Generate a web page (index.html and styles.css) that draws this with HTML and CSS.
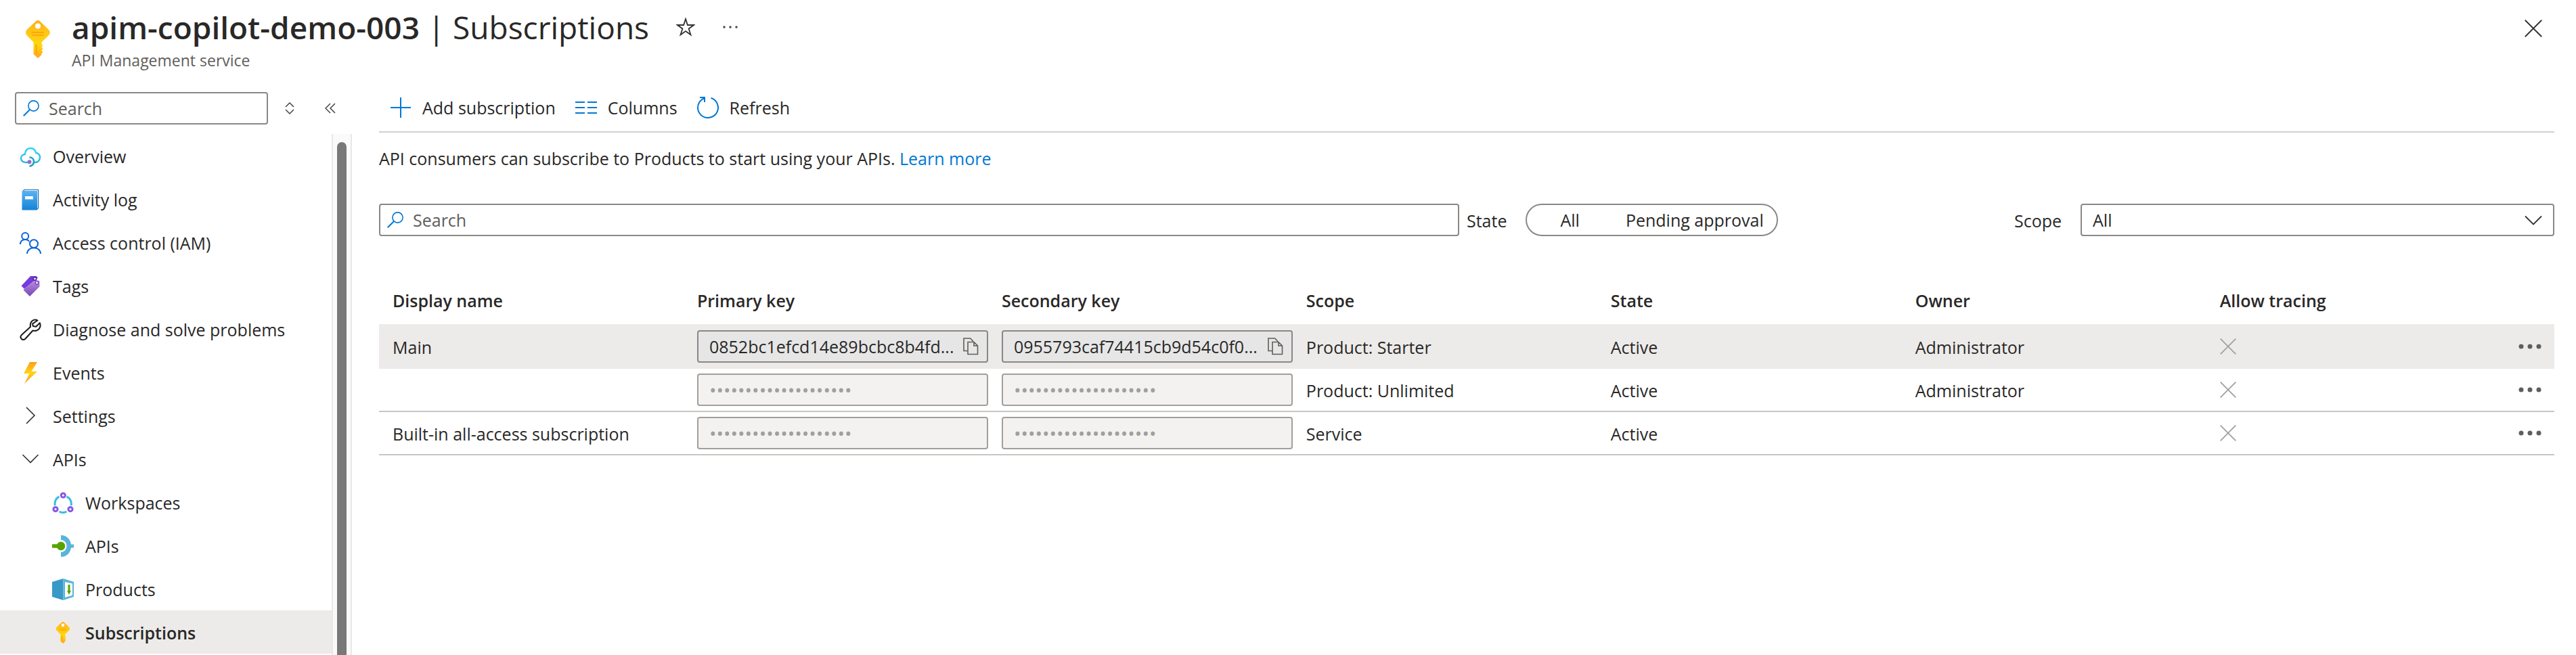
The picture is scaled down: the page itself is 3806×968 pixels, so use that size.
FILE: index.html
```html
<!DOCTYPE html>
<html lang="en">
<head>
<meta charset="utf-8">
<title>apim-copilot-demo-003 | Subscriptions</title>
<meta name="viewport" content="width=device-width, initial-scale=1">
<link rel="stylesheet" href="styles.css">
</head>
<body>
<svg class="defs" aria-hidden="true">
  <defs>
    <linearGradient id="gold" x1="0" y1="0" x2="0" y2="1">
      <stop offset="0" stop-color="#ffb01a"/><stop offset=".35" stop-color="#ffc814"/><stop offset=".65" stop-color="#ffd80f"/><stop offset="1" stop-color="#ffa51c"/>
    </linearGradient>
    <linearGradient id="cyan" x1="0" y1="0" x2="0" y2="1">
      <stop offset="0" stop-color="#32d4f5"/><stop offset="1" stop-color="#2bb8dc"/>
    </linearGradient>
    <linearGradient id="book" x1="0" y1="0" x2="0" y2="1">
      <stop offset="0" stop-color="#5ab2f2"/><stop offset="1" stop-color="#1383d8"/>
    </linearGradient>
    <linearGradient id="tag" x1="0" y1="0" x2="0" y2="1">
      <stop offset="0" stop-color="#c08ee6"/><stop offset="1" stop-color="#7348b0"/>
    </linearGradient>
    <linearGradient id="bolt" x1="0" y1="0" x2="0" y2="1">
      <stop offset="0" stop-color="#ff9d1e"/><stop offset=".5" stop-color="#ffd510"/><stop offset="1" stop-color="#ff9a20"/>
    </linearGradient>
    <symbol id="i-key" viewBox="0 0 36 56">
      <path d="M15 1.200q3-2.400 6 0L34 14q3.600 4 0 8L23.500 32.500V35l2 2-2 2.500 2 2.500-2 2.500 2 2.500-2 2V51l-5.500 5-6.500-6V32.500L1.500 22q-3-4 0-8Z" fill="url(#gold)"/>
      <circle cx="18" cy="8.500" r="4" fill="#fff"/>
      <path d="M9 17.800h18M9 21.800h18M15.500 35.500v15" stroke="#ff9f0f" stroke-width="1.800" fill="none"/>
    </symbol>
    <symbol id="i-search" viewBox="0 0 24 24">
      <circle cx="15.500" cy="8.500" r="7.600" fill="none" stroke="#0078d4" stroke-width="1.600"/>
      <path d="M10 14 .800 23.300" stroke="#0078d4" stroke-width="2" fill="none"/>
    </symbol>
    <symbol id="i-cross" viewBox="0 0 24 24">
      <path d="M.700.700 23.300 23.300M23.300.700.700 23.300" fill="none" stroke="currentColor" stroke-width="1.700"/>
    </symbol>
    <symbol id="i-copy" viewBox="0 0 24 26">
      <path d="M8 19.500H2V1h9.500l4.500 4.500M8 6.500h9l5.500 5.500v12.500H8ZM17 6.500V12h5.500" fill="none" stroke="#605e5c" stroke-width="1.600"/>
    </symbol>
    <symbol id="i-dots" viewBox="0 0 34 8">
      <g fill="#605e5c"><circle cx="4" cy="4" r="3.500"/><circle cx="17" cy="4" r="3.500"/><circle cx="30" cy="4" r="3.500"/></g>
    </symbol>
  </defs>
</svg>

<header class="header">
  <svg class="header-icon" aria-hidden="true"><use href="#i-key"/></svg>
  <div class="header-text">
    <div class="title-row">
      <h1 class="title"><strong class="title-name">apim-copilot-demo-003</strong> | Subscriptions</h1>
      <button class="icon-button" aria-label="Add to favorites">
        <svg width="28" height="28" viewBox="0 0 28 28"><path d="m14 2 2.900 9H26l-7.400 5.400 2.900 9.100L14 20l-7.500 5.500 2.900-9.100L2 11h9.100Z" fill="none" stroke="#323130" stroke-width="1.800"/></svg>
      </button>
      <button class="icon-button" aria-label="More">
        <svg width="24" height="8" viewBox="0 0 24 8"><g fill="#484644"><circle cx="3" cy="4" r="1.700"/><circle cx="12" cy="4" r="1.700"/><circle cx="21" cy="4" r="1.700"/></g></svg>
      </button>
    </div>
    <p class="subtitle">API Management service</p>
  </div>
  <button class="icon-button close" aria-label="Close"><svg width="26" height="26" color="#323130"><use href="#i-cross"/></svg></button>
</header>

<div class="shell">
  <aside class="sidebar">
    <div class="sidebar-tools">
      <label class="search-box sidebar-search">
        <svg class="search-icon" aria-hidden="true"><use href="#i-search"/></svg>
        <input class="search-input" type="search" placeholder="Search" aria-label="Search menu">
      </label>
      <button class="icon-button" aria-label="Expand or collapse groups">
        <svg width="14" height="18" viewBox="0 0 14 18"><path d="M1 7l6-6 6 6M1 11l6 6 6-6" fill="none" stroke="#484644" stroke-width="1.500"/></svg>
      </button>
      <button class="icon-button collapse" aria-label="Collapse menu">
        <svg width="16" height="16" viewBox="0 0 16 16"><path d="M8 1 1 8l7 7M15 1 8 8l7 7" fill="none" stroke="#484644" stroke-width="1.500"/></svg>
      </button>
    </div>
    <div class="nav-scroll">
      <nav class="nav">
        <a class="nav-item" href="#overview">
          <svg class="nav-icon" viewBox="0 0 32 32"><path d="M13 25H8.500C4.500 25 2 22.300 2 19c0-3.200 2.500-5.700 5.800-6C8.500 7 11.700 4 16 4c4.200 0 7.200 2.600 8.200 7 3.600.500 5.800 3.200 5.800 6.700 0 4-2.800 7.300-7 7.300h-2" fill="none" stroke="url(#cyan)" stroke-width="2.400"/><path d="M14.500 17.500c4 0 6.500 2.800 6.500 6.200s-2.500 6.800-6.500 6.800" fill="none" stroke="#1f9ec4" stroke-width="2.600"/><circle cx="14.500" cy="24.200" r="3" fill="#9a6cd0"/></svg>
          <span>Overview</span></a>
        <a class="nav-item" href="#activity">
          <svg class="nav-icon" viewBox="0 0 32 32"><path d="M4.500 4 7 1.500h20.500v27L25 31" fill="#fff" stroke="#1267ab" stroke-width="1.200"/><rect x="3.500" y="3" width="22.500" height="28.500" rx="1" fill="url(#book)"/><path d="M8 11h12v4.500H8z" fill="#fff"/></svg>
          <span>Activity log</span></a>
        <a class="nav-item" href="#iam">
          <svg class="nav-icon" viewBox="0 0 32 32"><g fill="none" stroke="#0a62dd" stroke-width="2"><circle cx="8.200" cy="6" r="5"/><path d="M1 18c0-4.500 3-7 7.200-7 2.800 0 4.600 1 5.800 2.800"/><circle cx="21" cy="17.200" r="6"/><path d="M11 32c.300-5.500 4.500-8.800 10-8.800s9.700 3.300 10 8.800"/></g></svg>
          <span>Access control (IAM)</span></a>
        <a class="nav-item" href="#tags">
          <svg class="nav-icon" viewBox="0 0 32 32"><path d="M16 1h8.500l2.500 2.500L7 20 2.500 15.500Z" fill="#773adc"/><path d="M23 6.500 29.500 8v8.500L15 31l-9.500-9.500Z" fill="url(#tag)"/><circle cx="22.500" cy="5" r="2.200" fill="#fff" stroke="#4b2090" stroke-width="1.500"/><circle cx="25.500" cy="11" r="2.200" fill="#fff" stroke="#7a43c4" stroke-width="1.500"/></svg>
          <span>Tags</span></a>
        <a class="nav-item" href="#diagnose">
          <svg class="nav-icon" viewBox="0 0 32 32"><path d="M26.500 2.500C21.500-.500 14.500 3.500 16 12L2.600 24.300c-3.200 3.700 1.500 8.800 5.500 5.700L19.500 17.500c8 2 13-4.500 10.300-11.300l-5.600 5.500-4.500-.800-.5-3.600Z" fill="none" stroke="#1b1a19" stroke-width="2" stroke-linejoin="round"/></svg>
          <span>Diagnose and solve problems</span></a>
        <a class="nav-item" href="#events">
          <svg class="nav-icon" viewBox="0 0 32 32"><path d="M15 0h11l-8.500 14H26L7 32l7.500-15H6Z" fill="url(#bolt)"/></svg>
          <span>Events</span></a>
        <a class="nav-item" href="#settings">
          <svg class="nav-icon" viewBox="0 0 32 32"><path d="M10 3l12 12-12 12" fill="none" stroke="#323130" stroke-width="1.600"/></svg>
          <span>Settings</span></a>
        <a class="nav-item" href="#apis-group">
          <svg class="nav-icon" viewBox="0 0 32 32"><path d="m4.500 9 11.500 11.500L27.500 9" fill="none" stroke="#323130" stroke-width="1.600"/></svg>
          <span>APIs</span></a>
        <a class="nav-item nav-sub" href="#workspaces">
          <svg class="nav-icon" viewBox="0 0 32 32"><g fill="none" stroke="#35bfe0" stroke-width="3"><path d="M4.200 20C3.500 13.500 6 9 10.500 6.800M21.500 6.800C26 9 29 13.500 28.200 20M10.500 29q5.500 3 11 0"/></g><g fill="#fff" stroke="#8a56e4" stroke-width="3"><circle cx="16.300" cy="5" r="3.100"/><circle cx="5" cy="25.500" r="3.100"/><circle cx="27" cy="25.500" r="3.100"/></g></svg>
          <span>Workspaces</span></a>
        <a class="nav-item nav-sub" href="#apis">
          <svg class="nav-icon" viewBox="0 0 32 32"><path d="M13 0c8.500 0 14 6 15 13.500h4v5h-4C27 26 21.500 32 13 32v-7c5 0 8.500-4 8.500-9S18 7 13 7Z" fill="#59b4d9"/><path d="M0 13.300h7.300a6.300 6.300 0 1 1 0 5.400H0Z" fill="#57a300"/></svg>
          <span>APIs</span></a>
        <a class="nav-item nav-sub" href="#products">
          <svg class="nav-icon" viewBox="0 0 32 32"><path d="M16.500 0 0 5v22l16.500 5Z" fill="#3999c6"/><path d="M16.500 0 32 5v22l-15.500 5Z" fill="#59b4d9"/><path d="m19 5 11 2.500v17.300L19 28Z" fill="#fff"/><path d="M23.500 9h3v9H28l-3 6-3-6h1.500Z" fill="#57a300"/></svg>
          <span>Products</span></a>
        <a class="nav-item nav-sub nav-current" href="#subscriptions" aria-current="page">
          <svg class="nav-icon"><use href="#i-key"/></svg>
          <span>Subscriptions</span></a>
      </nav>
      <div class="scroll-track" aria-hidden="true"><div class="scroll-thumb"></div></div>
    </div>
  </aside>

  <main class="main">
    <div class="toolbar">
      <button class="command">
        <svg class="command-icon" viewBox="0 0 32 32"><path d="M16 1v30M1 16h30" stroke="#0078d4" stroke-width="2" fill="none"/></svg>
        Add subscription</button>
      <button class="command">
        <svg class="command-icon" viewBox="0 0 32 32"><path d="M0 8h14M18 8h14M0 16h14M18 16h14M0 24h14M18 24h14" stroke="#0078d4" stroke-width="2" fill="none"/></svg>
        Columns</button>
      <button class="command">
        <svg class="command-icon" viewBox="0 0 32 32"><path d="M11 2C5 4 1 9.500 1 16a15 15 0 1 0 19.500-14.300M4 1h7v7" stroke="#0078d4" stroke-width="2" fill="none"/></svg>
        Refresh</button>
    </div>
    <p class="intro">API consumers can subscribe to Products to start using your APIs. <a class="link" href="#learn">Learn more</a></p>

    <div class="filters">
      <label class="search-box">
        <svg class="search-icon" aria-hidden="true"><use href="#i-search"/></svg>
        <input class="search-input" type="search" placeholder="Search" aria-label="Search subscriptions">
      </label>
      <div class="state-filter">
        <span class="filter-label" id="state-label">State</span>
        <div class="pill" role="group" aria-labelledby="state-label">
          <button class="pill-option">All</button>
          <button class="pill-option">Pending approval</button>
        </div>
      </div>
      <div class="scope-filter">
        <label class="filter-label" for="scope">Scope</label>
        <div class="select-wrap">
          <select class="select" id="scope"><option>All</option></select>
          <svg class="select-arrow" width="26" height="16" viewBox="0 0 26 16" aria-hidden="true"><path d="m1 1.500 12 12 12-12" fill="none" stroke="#323130" stroke-width="1.800"/></svg>
        </div>
      </div>
    </div>

    <table class="grid">
      <thead>
        <tr><th>Display name</th><th>Primary key</th><th>Secondary key</th><th>Scope</th><th>State</th><th>Owner</th><th>Allow tracing</th><th class="menu-cell" aria-label="Actions"></th></tr>
      </thead>
      <tbody>
        <tr class="selected">
          <td>Main</td>
          <td class="control"><div class="key shown"><input class="key-input" type="text" readonly value="0852bc1efcd14e89bcbc8b4fd..." aria-label="Primary key, Main"><button class="icon-button" aria-label="Copy primary key"><svg width="24" height="26"><use href="#i-copy"/></svg></button></div></td>
          <td class="control"><div class="key shown"><input class="key-input" type="text" readonly value="0955793caf74415cb9d54c0f0..." aria-label="Secondary key, Main"><button class="icon-button" aria-label="Copy secondary key"><svg width="24" height="26"><use href="#i-copy"/></svg></button></div></td>
          <td>Product: Starter</td><td>Active</td><td>Administrator</td>
          <td class="control"><svg class="off" role="img" aria-label="Not allowed"><use href="#i-cross"/></svg></td>
          <td class="control menu-cell"><button class="icon-button" aria-label="Row menu"><svg width="34" height="8"><use href="#i-dots"/></svg></button></td>
        </tr>
        <tr>
          <td></td>
          <td class="control"><div class="key"><input class="key-input masked" type="password" disabled value="00000000000000000000" aria-label="Primary key"></div></td>
          <td class="control"><div class="key"><input class="key-input masked" type="password" disabled value="00000000000000000000" aria-label="Secondary key"></div></td>
          <td>Product: Unlimited</td><td>Active</td><td>Administrator</td>
          <td class="control"><svg class="off" role="img" aria-label="Not allowed"><use href="#i-cross"/></svg></td>
          <td class="control menu-cell"><button class="icon-button" aria-label="Row menu"><svg width="34" height="8"><use href="#i-dots"/></svg></button></td>
        </tr>
        <tr>
          <td>Built-in all-access subscription</td>
          <td class="control"><div class="key"><input class="key-input masked" type="password" disabled value="00000000000000000000" aria-label="Primary key, built-in"></div></td>
          <td class="control"><div class="key"><input class="key-input masked" type="password" disabled value="00000000000000000000" aria-label="Secondary key, built-in"></div></td>
          <td>Service</td><td>Active</td><td></td>
          <td class="control"><svg class="off" role="img" aria-label="Not allowed"><use href="#i-cross"/></svg></td>
          <td class="control menu-cell"><button class="icon-button" aria-label="Row menu"><svg width="34" height="8"><use href="#i-dots"/></svg></button></td>
        </tr>
      </tbody>
    </table>
  </main>
</div>
</body>
</html>
```
FILE: styles.css
```css
* { box-sizing: border-box; }

body {
  margin: 0;
  min-height: 100vh;
  display: flex;
  flex-direction: column;
  background: #fff;
  color: #292827;
  font: 25px/38px "Open Sans", "Noto Sans", sans-serif;
}

h1, p { margin: 0; }
svg { display: block; flex: none; }
a { color: inherit; text-decoration: none; }

button, input, select {
  margin: 0;
  padding: 0;
  border: 0;
  background: none;
  color: inherit;
  font: inherit;
}

.defs { position: absolute; width: 0; height: 0; }
.icon-button { display: flex; flex: none; }

/* Header */
.header {
  display: flex;
  align-items: flex-start;
  padding: 10px 50px 0 38px;
}
.header-icon { width: 36px; height: 56px; margin: 20px 32px 0 0; }
.title-row { display: flex; align-items: center; gap: 40px; }
.title { font-size: 46px; line-height: 60px; font-weight: 400; }
.title-name { font-weight: 600; }
.subtitle { font-size: 23px; color: #605e5c; }
.close { margin: 19px 0 0 auto; }

/* Page body */
.shell { display: flex; flex: 1; }
.sidebar { display: flex; flex-direction: column; flex: none; width: 520px; }
.sidebar-tools {
  display: flex;
  align-items: center;
  padding: 28px 24px 14px 22px;
}
.sidebar-search { width: 374px; margin-right: 25px; }
.collapse { margin-left: auto; }

.search-box {
  display: flex;
  align-items: center;
  gap: 14px;
  height: 48px;
  padding: 0 10px;
  border: 2px solid #8a8886;
  border-radius: 4px;
}
.search-icon { width: 24px; height: 24px; }
.search-input { flex: 1; min-width: 0; outline: 0; }
.search-input::placeholder { color: #605e5c; opacity: 1; }

.nav-scroll { display: flex; flex: 1; }
.nav { flex: 1; }
.nav-item {
  display: flex;
  align-items: center;
  gap: 17px;
  height: 64px;
  padding: 2px 0 0 29px;
}
.nav-icon { width: 32px; height: 32px; }
.nav-sub { padding-left: 77px; }
.nav-current { background: #edebe9; font-weight: 600; }
.scroll-track {
  width: 30px;
  padding: 12px 6px 0;
  border: solid #e8e8e8;
  border-width: 0 2px;
  background: #fafafa;
}
.scroll-thumb { height: 100%; border-radius: 7px 7px 0 0; background: #787878; }

/* Main pane */
.main { flex: 1; min-width: 0; padding: 16px 32px 0 40px; }
.toolbar {
  display: flex;
  align-items: center;
  gap: 29px;
  height: 72px;
  padding-left: 16px;
  border-bottom: 2px solid #d2d0ce;
}
.command { display: flex; align-items: center; gap: 16px; }
.command-icon { width: 32px; height: 32px; }
.intro { margin: 19px 0 48px; }
.link { color: #0078d4; }

.filters {
  display: grid;
  grid-template-columns: 1596fr 820fr 798fr;
  margin-bottom: 60px;
}
.state-filter, .scope-filter { display: flex; align-items: center; gap: 28px; }
.state-filter { padding-left: 11px; }
.filter-label { padding-top: 2px; }
.pill {
  display: flex;
  gap: 68px;
  height: 48px;
  padding: 0 19px 0 49px;
  border: 2px solid #8a8886;
  border-radius: 24px;
}
.select-wrap { position: relative; flex: 1; }
.select {
  appearance: none;
  display: block;
  width: 100%;
  height: 48px;
  padding: 0 60px 0 16px;
  border: 2px solid #8a8886;
  border-radius: 4px;
  background: #fff;
}
.select-arrow { position: absolute; top: 17px; right: 18px; pointer-events: none; }

/* Subscriptions table */
.grid { width: 100%; table-layout: fixed; border-spacing: 0; }
.grid th, .grid td { padding: 2px 0 0 20px; text-align: left; vertical-align: middle; }
.grid th {
  width: 14%;
  height: 72px;
  padding-top: 0;
  border-bottom: 2px solid #edebe9;
  font-weight: 600;
}
.grid td { height: 64px; border-bottom: 2px solid #c8c6c4; }
.grid .control { padding-top: 0; }
.grid .menu-cell { width: 2%; padding-left: 11px; }
.selected { background: #edebe9; }
.grid .selected td { border-color: #edebe9; }

.key {
  display: flex;
  align-items: center;
  height: 48px;
  padding: 0 12px 0 16px;
  border: 2px solid #a19f9d;
  border-radius: 4px;
  background: #f3f2f1;
  color: #a19f9d;
}
.shown { border-color: #8a8886; background: #e6e6e6; color: #292827; }
.key-input { flex: 1; min-width: 0; outline: 0; }
.masked { font-size: 28px; }
.off { width: 24px; height: 24px; color: #a19f9d; }
```
